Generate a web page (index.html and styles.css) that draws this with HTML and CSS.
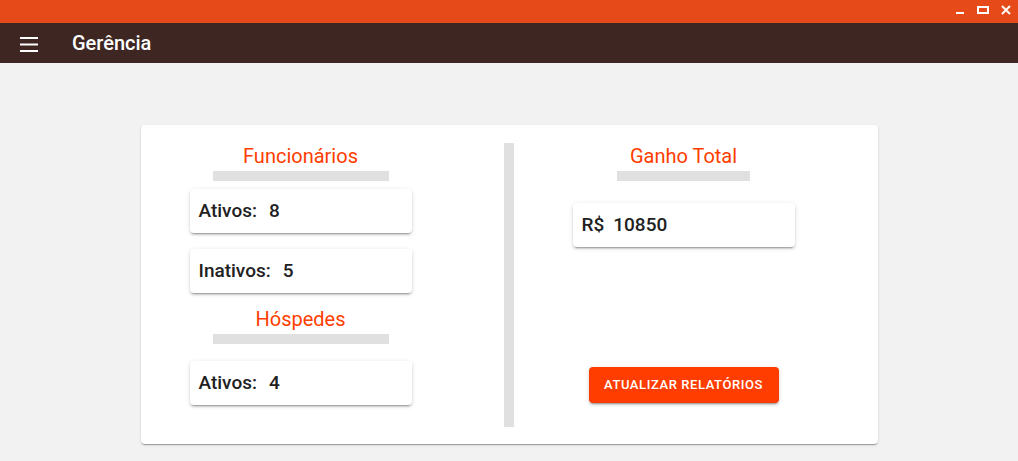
FILE: index.html
```html
<!DOCTYPE html>
<html lang="pt">
<head>
<meta charset="utf-8">
<title>Gerência</title>
<link rel="stylesheet" href="styles.css">
</head>
<body>
<div class="titlebar">
  <div class="winctl">
    <svg class="wc" width="12" height="12" viewBox="0 0 12 12"><rect x="2" y="9" width="8" height="2" fill="#fff"/></svg>
    <svg class="wc" width="12" height="12" viewBox="0 0 12 12"><rect x="1" y="4" width="10" height="6" fill="none" stroke="#fff" stroke-width="2"/><rect x="0.5" y="3" width="11" height="2" fill="#fff"/></svg>
    <svg class="wc" width="12" height="12" viewBox="0 0 12 12"><path d="M2 3 L10 11 M10 3 L2 11" stroke="#fff" stroke-width="2"/></svg>
  </div>
</div>
<header class="appbar">
  <svg class="menu" width="18" height="16" viewBox="0 0 18 16"><rect x="0" y="1" width="18" height="2" fill="#fff"/><rect x="0" y="7.5" width="18" height="2" fill="#fff"/><rect x="0" y="14" width="18" height="2" fill="#fff"/></svg>
  <span class="apptitle">Gerência</span>
</header>
<main class="page">
  <section class="card">
    <div class="col col-left">
      <h2 class="heading">Funcionários</h2>
      <div class="rule rule-wide"></div>
      <div class="stat first"><span class="label">Ativos:</span><span class="value">8</span></div>
      <div class="stat"><span class="label">Inativos:</span><span class="value">5</span></div>
      <h2 class="heading heading-second">Hóspedes</h2>
      <div class="rule rule-wide"></div>
      <div class="stat second-group"><span class="label">Ativos:</span><span class="value">4</span></div>
    </div>
    <div class="divider"></div>
    <div class="col col-right">
      <h2 class="heading">Ganho Total</h2>
      <div class="rule rule-narrow"></div>
      <div class="stat money"><span class="label">R$</span><span class="value">10850</span></div>
      <button class="btn">ATUALIZAR RELATÓRIOS</button>
    </div>
  </section>
</main>
</body>
</html>
```
FILE: styles.css
```css
* { box-sizing: border-box; }
html, body { margin: 0; padding: 0; }
body {
  width: 1018px;
  height: 461px;
  overflow: hidden;
  background: #f2f2f2;
  font-family: Roboto, "Noto Sans", sans-serif;
}
.titlebar {
  height: 23px;
  background: #e64a19;
  display: flex;
  justify-content: flex-end;
}
.winctl {
  display: flex;
  gap: 11px;
  padding: 3px 6px 0 0;
}
.wc { display: block; }
.appbar {
  height: 40px;
  background: #3e2723;
  display: flex;
  align-items: center;
  padding-left: 20px;
}
.menu { display: block; margin-top: 1px; }
.apptitle {
  margin-left: 34px;
  color: #fff;
  font-size: 20px;
  font-weight: 500;
  line-height: 40px;
}
.page {
  padding-top: 62px;
  display: flex;
  justify-content: center;
}
.card {
  width: 737px;
  height: 319px;
  background: #fff;
  border-radius: 4px;
  box-shadow: 0 2px 1px -1px rgba(0,0,0,.2), 0 1px 1px 0 rgba(0,0,0,.14), 0 1px 3px 0 rgba(0,0,0,.12);
  display: flex;
  padding: 18px 0 17px;
}
.col {
  display: flex;
  flex-direction: column;
  align-items: center;
  padding-top: 1px;
}
.col-left { width: 320px; }
.divider {
  width: 10px;
  background: #e0e0e0;
  margin-left: 43px;
}
.col-right { width: 340px; }
.heading {
  margin: 0;
  font-size: 20px;
  line-height: 24px;
  font-weight: 400;
  color: #ff3d00;
}
.heading-second { margin-top: 14px; }
.rule {
  height: 10px;
  background: #e0e0e0;
  margin-top: 3px;
}
.rule-wide { width: 176px; }
.rule-narrow { width: 133px; }
.stat {
  width: 222px;
  height: 44px;
  background: #fff;
  border-radius: 4px;
  box-shadow: 0 3px 1px -2px rgba(0,0,0,.2), 0 2px 2px 0 rgba(0,0,0,.14), 0 1px 5px 0 rgba(0,0,0,.12);
  display: flex;
  align-items: center;
  gap: 12px;
  padding-left: 9px;
  font-size: 19px;
  font-weight: 500;
  line-height: 44px;
  color: #212121;
  margin-top: 16px;
}
.stat.first { margin-top: 8px; }
.stat.second-group { margin-top: 17px; }
.stat.money { margin-top: 22px; gap: 9px; }
.btn {
  margin-top: 120px;
  width: 190px;
  height: 36px;
  border: none;
  border-radius: 4px;
  background: #ff3d00;
  color: #fff;
  font-family: Roboto, "Noto Sans", sans-serif;
  font-size: 13px;
  font-weight: 500;
  letter-spacing: 0.045em;
  line-height: 36px;
  padding: 0;
  box-shadow: 0 3px 1px -2px rgba(0,0,0,.2), 0 2px 2px 0 rgba(0,0,0,.14), 0 1px 5px 0 rgba(0,0,0,.12);
}
```
